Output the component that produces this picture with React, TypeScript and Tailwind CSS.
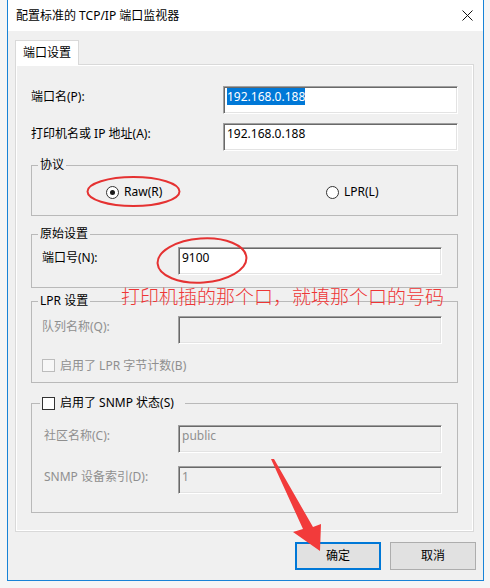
import React from "react";

const font = "font-['Noto_Sans','Noto_Sans_CJK_SC',sans-serif]";

function Edit({
  value,
  disabled,
  selected,
  wide,
}: {
  value?: string;
  disabled?: boolean;
  selected?: boolean;
  wide?: boolean;
}) {
  return (
    <div
      className={`h-[28px] shrink-0 border border-t-[#a0a0a0] border-l-[#a0a0a0] border-r-white border-b-white shadow-[inset_1px_1px_0_#696969,inset_-1px_-1px_0_#e3e3e3] pl-[3px] pt-[1px] text-[12px] leading-[17px] ${
        wide ? "w-[235px]" : "w-[264px]"
      } ${disabled ? "bg-[#f0f0f0] text-[#8f8f8f]" : "bg-white text-black"}`}
    >
      {selected ? (
        <span className="inline-block bg-[#0078d7] text-white">{value}</span>
      ) : (
        value
      )}
    </div>
  );
}

function Radio({ checked, label }: { checked?: boolean; label: string }) {
  return (
    <div className="flex items-center gap-[5px] h-[16px]">
      <span className="w-[13px] h-[13px] rounded-full border border-[#333] bg-white flex items-center justify-center">
        {checked && <span className="w-[5px] h-[5px] rounded-full bg-[#1a1a1a]" />}
      </span>
      <span className="leading-[16px]">{label}</span>
    </div>
  );
}

function Check({ disabled }: { disabled?: boolean }) {
  return (
    <span
      className={`w-[13px] h-[13px] shrink-0 border ${
        disabled ? "border-[#bcbcbc] bg-[#f7f7f7]" : "border-[#333] bg-white"
      }`}
    />
  );
}

export default function App() {
  return (
    <div className={`relative w-[490px] h-[588px] overflow-hidden bg-[#f5f5f5] text-[12px] text-black ${font}`}>
      <div className="ml-[7px] w-[477px] h-[581px] border-x border-b border-[#1883d7] bg-[#f0f0f0] flex flex-col">
        {/* 标题栏 */}
        <div className="h-[31px] bg-white flex items-center justify-between pl-[8px] pr-[10px]">
          <span className="leading-[16px]">配置标准的 TCP/IP 端口监视器</span>
          <svg width="11" height="11" viewBox="0 0 11 11">
            <path d="M0.5 0.5 L10.5 10.5 M10.5 0.5 L0.5 10.5" stroke="#111" strokeWidth="1" />
          </svg>
        </div>

        <div className="flex-1 px-[7px] pt-[9px]">
          {/* tab */}
          <div className="relative z-10 -mb-px w-[64px] h-[25px] border-x border-t border-[#d9d9d9] bg-white flex items-center pl-[7px]">
            端口设置
          </div>

          <div className="w-[459px] h-[468px] border border-[#d9d9d9]">
            <div className="h-full border border-white px-[14px] pt-[20px]">
              <div className="flex items-start">
                <div className="w-[193px] pt-[2px] leading-[17px]">端口名(P):</div>
                <Edit value="192.168.0.188" selected wide />
              </div>
              <div className="flex items-start mt-[9px]">
                <div className="w-[193px] pt-[2px] leading-[17px]">打印机名或 IP 地址(A):</div>
                <Edit value="192.168.0.188" wide />
              </div>

              {/* 协议 */}
              <div className="relative mt-[14px] h-[51px] border border-[#b9b9b9] pl-[74px] pt-[18px]">
                <div className="absolute left-[6px] -top-[9px] px-[2px] bg-[#f0f0f0] leading-[16px]">协议</div>
                <div className="flex">
                  <div className="w-[220px]">
                    <Radio checked label="Raw(R)" />
                  </div>
                  <Radio label="LPR(L)" />
                </div>
              </div>

              {/* 原始设置 */}
              <div className="relative mt-[18px] h-[54px] border border-[#b9b9b9] pl-[10px] pt-[12px]">
                <div className="absolute left-[6px] -top-[9px] px-[2px] bg-[#f0f0f0] leading-[16px]">原始设置</div>
                <div className="flex items-start">
                  <div className="w-[136px] pt-[2px] leading-[17px]">端口号(N):</div>
                  <Edit value="9100" />
                </div>
              </div>

              {/* LPR 设置 */}
              <div className="relative mt-[13px] h-[82px] border border-[#b9b9b9] pl-[10px] pt-[14px]">
                <div className="absolute left-[6px] -top-[9px] px-[2px] bg-[#f0f0f0] leading-[16px]">LPR 设置</div>
                <div className="flex items-start">
                  <div className="w-[136px] pt-[2px] leading-[17px] text-[#8f8f8f]">队列名称(Q):</div>
                  <Edit disabled />
                </div>
                <div className="flex items-center gap-[5px] mt-[15px] h-[13px] text-[#8f8f8f]">
                  <Check disabled />
                  <span className="leading-[16px]">启用了 LPR 字节计数(B)</span>
                </div>
              </div>

              {/* SNMP */}
              <div className="relative mt-[20px] h-[110px] border border-[#b9b9b9] pl-[12px] pt-[21px]">
                <div className="absolute left-[8px] -top-[9px] pl-[2px] pr-[11px] bg-[#f0f0f0] flex items-center gap-[5px] h-[16px]">
                  <Check />
                  <span className="leading-[16px]">启用了 SNMP 状态(S)</span>
                </div>
                <div className="flex items-start">
                  <div className="w-[134px] pt-[2px] leading-[17px] text-[#8f8f8f]">社区名称(C):</div>
                  <Edit value="public" disabled />
                </div>
                <div className="flex items-start mt-[13px]">
                  <div className="w-[134px] pt-[2px] leading-[17px] text-[#8f8f8f]">SNMP 设备索引(D):</div>
                  <Edit value="1" disabled />
                </div>
              </div>
            </div>
          </div>

          {/* buttons */}
          <div className="flex justify-end gap-[9px] mt-[10px]">
            <button className="w-[86px] h-[28px] border-2 border-[#0078d7] bg-[#e1e1e1] flex items-center justify-center">
              确定
            </button>
            <button className="w-[86px] h-[28px] border border-[#adadad] bg-[#e1e1e1] flex items-center justify-center">
              取消
            </button>
          </div>
        </div>
      </div>

      {/* 标注 */}
      <div className="absolute left-[121px] top-[288px] text-[19px] leading-[19px] font-light text-[#ee3636] whitespace-nowrap">
        打印机插的那个口，就填那个口的号码
      </div>
      <svg className="absolute left-0 top-0 pointer-events-none" width="490" height="588" viewBox="0 0 490 588">
        <ellipse cx="133.5" cy="191.5" rx="46" ry="14.5" fill="none" stroke="#e53232" strokeWidth="2" />
        <ellipse cx="202" cy="260.5" rx="44.5" ry="22" fill="none" stroke="#e53232" strokeWidth="2" transform="rotate(-4 202 260.5)" />
        <polygon
          points="271,459 274,459 313,527 321,524 320,551 293,532 303,529"
          fill="#f23b3b"
        />
      </svg>
    </div>
  );
}
